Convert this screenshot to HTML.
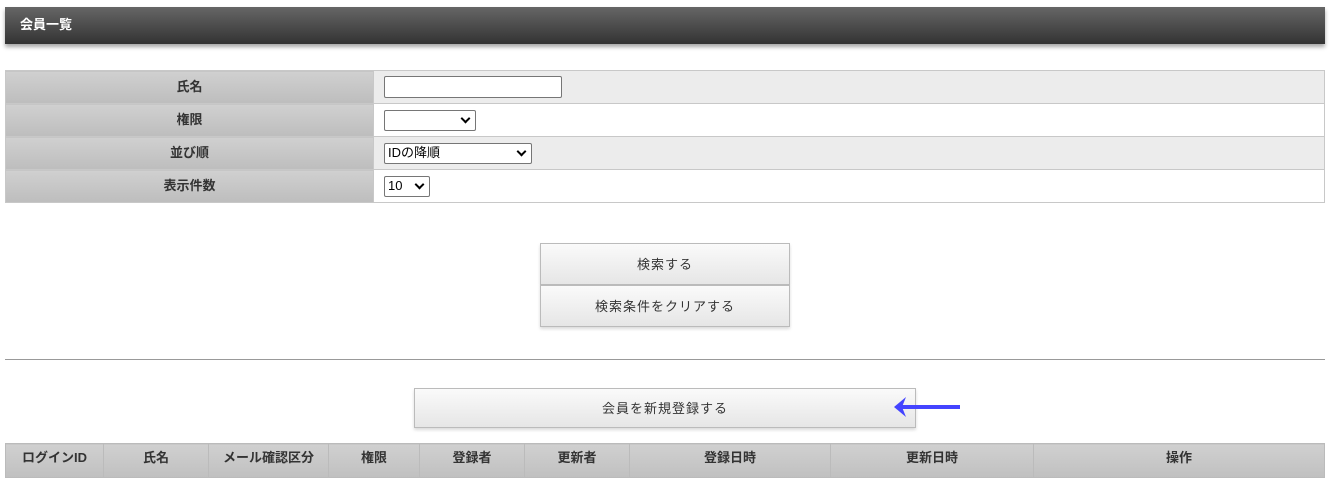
<!DOCTYPE html>
<html><head><meta charset="utf-8"><style>
body{margin:0;width:1331px;height:455px;overflow:hidden;background:#fff;font-family:"Liberation Sans","Noto Sans CJK JP",sans-serif;font-size:13px;color:#333;position:relative}
.hd{position:absolute;left:5px;top:7px;width:1320px;height:37px;background:linear-gradient(#666,#333);box-shadow:0 3px 4px rgba(0,0,0,.35);color:#fff;font-weight:bold;font-size:13px;line-height:35px;box-sizing:border-box;padding-left:15px}
table.f{position:absolute;left:5px;top:70px;width:1320px;border-collapse:collapse}
table.f td{border:1px solid #c8c8c8;height:32px;padding:0}
table.f td.l{width:367px;background:linear-gradient(#d0d0d0,#bdbdbd);text-align:center;font-weight:bold;color:#333}
table.f td.l span{position:relative;top:-2px}
table.f tr:nth-child(odd) td.v{background:#ececec}
td.v{padding-left:10px!important}
.sel{display:inline-block;border:1px solid #767676;border-radius:2px;background:#fff;height:19px;box-sizing:border-box;position:relative;vertical-align:middle;font-size:13px;line-height:17px;padding-left:3px;color:#000}
.sel.dd:after{content:"";position:absolute;right:6px;top:4px;width:5px;height:5px;border-right:2px solid #000;border-bottom:2px solid #000;transform:rotate(45deg)}
.btn{position:absolute;background:linear-gradient(#fafafa,#e6e6e6);border:1px solid #bbb;box-sizing:border-box;text-align:center;color:#333;font-size:13px;box-shadow:0 2px 3px rgba(0,0,0,.15);letter-spacing:1px}
table.t{position:absolute;left:5px;top:443px;width:1320px;border-collapse:collapse;table-layout:fixed}
table.t td{border:1px solid #bbb;background:linear-gradient(#d0d0d0,#c0c0c0);height:30px;text-align:center;font-weight:bold;vertical-align:top;padding:3px 0 0;font-size:13px;white-space:nowrap;overflow:hidden}
</style></head><body>
<div class="hd">会員一覧</div>
<table class="f">
<tr><td class="l"><span>氏名</span></td><td class="v"><span class="sel" style="width:178px;height:22px"></span></td></tr>
<tr><td class="l"><span>権限</span></td><td class="v"><span class="sel dd" style="width:92px;height:21px"></span></td></tr>
<tr><td class="l"><span>並び順</span></td><td class="v"><span class="sel dd" style="width:148px;height:21px">IDの降順</span></td></tr>
<tr><td class="l"><span>表示件数</span></td><td class="v"><span class="sel dd" style="width:46px;height:21px">10</span></td></tr>
</table>
<div class="btn" style="left:540px;top:243px;width:250px;height:42px;line-height:42px">検索する</div>
<div class="btn" style="left:540px;top:285px;width:250px;height:42px;line-height:42px">検索条件をクリアする</div>
<div style="position:absolute;left:5px;top:359px;width:1320px;height:1px;background:#999"></div>
<div class="btn" style="left:414px;top:388px;width:502px;height:40px;line-height:40px">会員を新規登録する</div>
<svg style="position:absolute;left:890px;top:395px" width="72" height="26"><rect x="10" y="10" width="60" height="4" fill="#4444ff"/><path d="M4 12 L16 2 L12 12 L16 22 Z" fill="#4444ff"/></svg>
<table class="t"><tr>
<td style="width:97px">ログインID</td><td style="width:104px">氏名</td><td style="width:119px">メール確認区分</td><td style="width:90px">権限</td><td style="width:104px">登録者</td><td style="width:104px">更新者</td><td style="width:200px">登録日時</td><td style="width:202px">更新日時</td><td>操作</td>
</tr></table>
</body></html>
